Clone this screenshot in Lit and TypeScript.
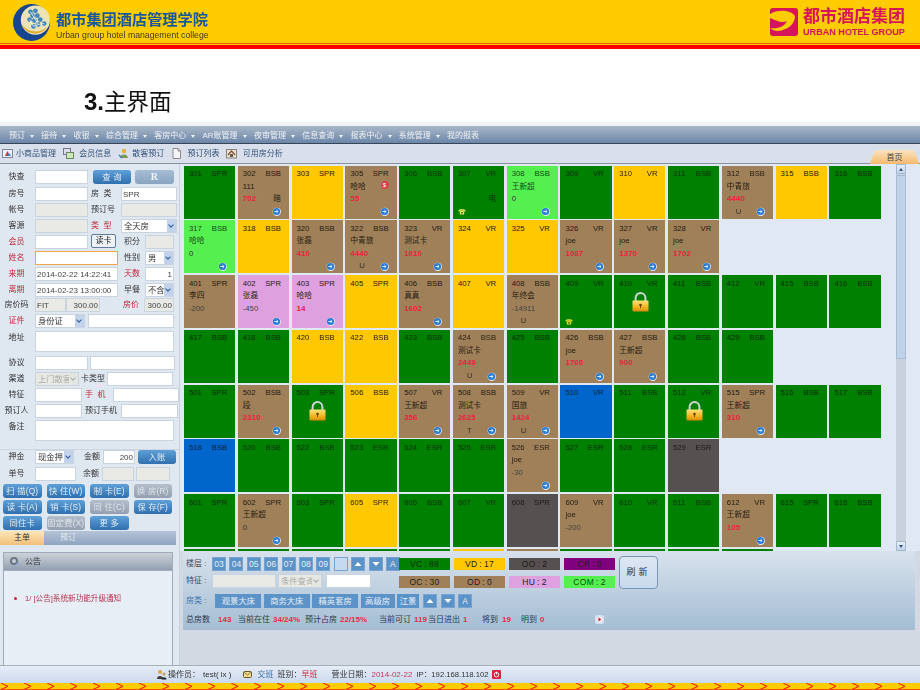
import { LitElement, html, css, svg } from 'lit';
import { customElement } from 'lit/decorators.js';

type Room = {
  no: string; type: string; c: string;
  name?: string; amt?: string; red?: boolean; note?: string; flag?: string;
  dot?: boolean; phone?: string; lock?: boolean; badge?: boolean;
};

const g = (no: string, type: string, extra: Partial<Room> = {}): Room => ({ no, type, c: 'vc', ...extra });
const y = (no: string, type: string): Room => ({ no, type, c: 'vd' });
// occupied room: brown tile with guest, balance and the blue marker
const o = (no: string, type: string, name: string, amt: string, flag = '', extra: Partial<Room> = {}): Room => ({
  no, type, c: 'oc', name, amt, red: !amt.startsWith('-') && amt !== '0', flag, dot: true, ...extra,
});

const ROWS: Room[][] = [
  [g('301', 'SPR'), o('302', 'BSB', '111', '702', '', { note: '暗' }), y('303', 'SPR'), o('305', 'SPR', '哈哈', '55', '', { badge: true }),
   g('306', 'BSB'), g('307', 'VR', { note: '电', phone: 'dark' }), o('308', 'BSB', '王新超', '0', '', { c: 'com' }), g('309', 'VR'), y('310', 'VR'),
   g('311', 'BSB'), o('312', 'BSB', '中青旅', '4440', 'U'), y('315', 'BSB'), g('316', 'BSB')],
  [o('317', 'BSB', '哈哈', '0', '', { c: 'com' }), y('318', 'BSB'), o('320', 'BSB', '张磊', '410'), o('322', 'BSB', '中青旅', '4440', 'U'),
   o('323', 'VR', '测试卡', '1010'), y('324', 'VR'), y('325', 'VR'), o('326', 'VR', 'joe', '1087'), o('327', 'VR', 'joe', '1370'), o('328', 'VR', 'joe', '1702')],
  [o('401', 'SPR', '李四', '-200', '', { dot: false }), o('402', 'SPR', '张磊', '-450', '', { c: 'hu' }), o('403', 'SPR', '哈哈', '14', '', { c: 'hu' }),
   y('405', 'SPR'), o('406', 'BSB', '真真', '1602'), y('407', 'VR'), o('408', 'BSB', '年终会', '-14911', 'U', { dot: false }),
   g('409', 'VR', { phone: 'yellow' }), g('410', 'VR', { lock: true }), g('411', 'BSB'), g('412', 'VR'), g('415', 'BSB'), g('416', 'BSB')],
  [g('417', 'BSB'), g('418', 'BSB'), y('420', 'BSB'), y('422', 'BSB'), g('423', 'BSB'), o('424', 'BSB', '测试卡', '2449', 'U'), g('425', 'BSB'),
   o('426', 'BSB', 'joe', '1760'), o('427', 'BSB', '王新超', '900'), g('428', 'BSB'), g('429', 'BSB')],
  [g('501', 'SPR'), o('502', 'BSB', '段', '2310'), g('503', 'SPR', { lock: true }), y('506', 'BSB'), o('507', 'VR', '王新超', '356'),
   o('508', 'BSB', '测试卡', '2625', 'T'), o('509', 'VR', '国旅', '1424', 'U'), { no: '510', type: 'VR', c: 'blue' }, g('511', 'BSB'), g('512', 'VR', { lock: true }),
   o('515', 'SPR', '王新超', '310'), g('516', 'BSB'), g('517', 'BSB')],
  [{ no: '518', type: 'BSB', c: 'blue' }, g('520', 'BSB'), g('522', 'BSB'), g('523', 'ESR'), g('524', 'ESR'), g('525', 'ESR'), o('526', 'ESR', 'joe', '-30'),
   g('527', 'ESR'), g('528', 'ESR'), { no: '529', type: 'ESR', c: 'oo' }],
  [g('601', 'SPR'), o('602', 'SPR', '王新超', '0'), g('603', 'SPR'), y('605', 'SPR'), g('606', 'BSB'), g('607', 'VR'), { no: '608', type: 'SPR', c: 'oo' },
   o('609', 'VR', 'joe', '-200', '', { dot: false }), g('610', 'VR'), g('611', 'BSB'), o('612', 'VR', '王新超', '105'), g('615', 'SPR'), g('616', 'BSB')],
];

// the eighth row only shows its top edge above the panel
const NEXT_ROW = ['vc', 'vc', 'vc', 'vc', 'vc', 'vd', 'oc', 'vc', 'vc', 'vc', 'vc'];

const MENU = ['预订', '接待', '收银', '综合管理', '客房中心', 'AR账管理', '夜审管理', '信息查询', '报表中心', '系统管理'];

const dotIcon = html`<svg class="dot" viewBox="0 0 10 10"><circle cx="5.300" cy="5.300" r="4.600" fill="#e8eef6"/><circle cx="5" cy="5" r="4" fill="#2a78d0"/><path d="M2.600 5h4M5 3.400 6.800 5 5 6.600" fill="none" stroke="#dff" stroke-width="1"/></svg>`;

const lockIcon = html`<svg class="lock" viewBox="0 0 17 20"><path d="M3.600 10V6a4.900 4.900 0 0 1 9.800 0v4" fill="none" stroke="#cfd4d8" stroke-width="2"/><rect x=".5" y="8.500" width="16" height="11" rx="1" fill="url(#lk)"/><defs><linearGradient id="lk" x1="0" y1="0" x2="0" y2="1"><stop offset="0" stop-color="#ffe27a"/><stop offset=".6" stop-color="#f5b41e"/><stop offset="1" stop-color="#d88a08"/></linearGradient></defs><circle cx="8.500" cy="13" r="1.300" fill="#6a4300"/><rect x="8" y="13" width="1" height="3" fill="#6a4300"/></svg>`;

const phoneIcon = (tone: string) => html`<svg class="phone ${tone}" viewBox="0 0 9 8"><path d="M.5 3C1 1 8 1 8.500 3V4H6.500V3H2.500V4H.500Z" fill="currentColor"/><path d="M2 4.500 3 3.500H6L7 4.500V7.500H2Z" fill="currentColor"/><circle cx="4.500" cy="5.500" r="1" fill="#165a10"/></svg>`;

@customElement('app-root')
export class AppRoot extends LitElement {
  static styles = css`
    :host { display: block; width: 920px; height: 690px; overflow: hidden; background: #fff; }
    * { box-sizing: border-box; }
    .page { width: 920px; height: 690px; display: flex; flex-direction: column; filter: blur(.3px);
      font: 8px/1 "Liberation Sans", "Noto Sans CJK SC", sans-serif; color: #222; }

    /* slide header */
    .head { height: 49px; flex: none; background: #ffcc00; border-bottom: 4px solid #f00; display: flex; justify-content: space-between; position: relative; }
    .head::after { content: ""; position: absolute; left: 0; right: 0; bottom: 1px; height: 1px; background: #e8590a; }
    .brand { display: flex; gap: 5px; padding: 4px 0 0 12px; }
    .brand svg { width: 39px; height: 37px; }
    .brand-zh { font-size: 15.200px; font-weight: 700; color: #17579e; margin-top: 7px; white-space: nowrap; line-height: 18px; }
    .brand-en { font-size: 8.700px; color: #3b3b30; margin-top: 2px; white-space: nowrap; }
    .group { display: flex; gap: 5px; padding: 8px 15px 0 0; }
    .group svg { width: 28px; height: 28px; }
    .group-zh { font-size: 17px; font-weight: 700; color: #d5145c; line-height: 17px; white-space: nowrap; }
    .group-en { font-size: 9.100px; font-weight: 700; color: #d5145c; margin-top: 3px; white-space: nowrap; }
    .title { height: 73px; flex: none; padding: 39px 0 0 84px; font-size: 22.500px; line-height: 28px; color: #111; }
    .title b { font-weight: 700; font-size: 24px; }

    /* menu and toolbar */
    .menu { height: 22px; flex: none; border-top: 4px solid #eff3f6; border-bottom: 1px solid #39465a; background: linear-gradient(#a9b7c9, #6b86a8);
      display: flex; padding: 2px 0 0 9px; align-items: center; color: #eef1f5; }
    .menu span { display: flex; align-items: center; white-space: nowrap; margin-right: 7.300px; }
    .menu i { width: 0; height: 0; border: 2px solid transparent; border-top: 3px solid #eef1f5; border-bottom: 0; margin: 1px 0 0 5px; }
    .tools { height: 20px; flex: none; background: #d9e0eb; border-bottom: 1px solid #88929f; display: flex; align-items: center; padding-left: 2px; color: #33507a; position: relative; }
    .tools span { display: flex; align-items: center; gap: 3px; margin-right: 7px; white-space: nowrap; }
    .tools svg { width: 11px; height: 11px; }
    .home-tab { position: absolute; right: 1px; bottom: -1px; width: 49px; height: 14px; background: linear-gradient(#fbe3c0, #f5ba6e);
      clip-path: polygon(0 100%, 9% 8%, 14% 0, 86% 0, 91% 8%, 100% 100%); text-align: center; line-height: 15px; color: #444; }

    .main { flex: 1; display: flex; min-height: 0; }

    /* left form */
    .left { width: 180px; flex: none; background: #dfe7f1; border-right: 1px solid #c9d3de; padding-top: 6px; display: flex; flex-direction: column; }
    .r { display: flex; align-items: flex-start; height: 16px; flex: none; white-space: nowrap; }
    .r.t17 { height: 17px; } .r.t15 { height: 15px; } .r.t25 { height: 25px; } .r.t21 { height: 21px; }
    .lb { width: 35px; flex: none; text-align: center; line-height: 14px; padding-right: 2px; font-weight: 400; color: #333; }
    .lb.n { width: auto; padding: 0; }
    .red { color: #c4283a !important; }
    .f { height: 14px; border: 1px solid #c9d4df; background: #fff; font: 8px "Liberation Sans", "Noto Sans CJK SC", sans-serif; color: #444; padding: 0 1px; flex: none; display: block; outline: none; border-radius: 0; }
    .f.gr { background: #e9e9e6; }
    .f.ra { text-align: right; }
    .f.on { border-color: #efa548; }
    .f.tall { height: 21px; }
    .sel { height: 14px; border: 1px solid #c9d4df; background: #fff; flex: none; display: flex; font-size: 8.300px; line-height: 12px; padding-left: 2px; overflow: hidden; color: #333; }
    .sel em { font-style: normal; flex: 1; overflow: hidden; white-space: nowrap; }
    .sel i { width: 9px; flex: none; background: #c3d3ec; position: relative; }
    .sel i::after { content: ""; position: absolute; left: 2px; top: 3px; width: 3px; height: 3px; border: solid #2c5aa0; border-width: 0 1.200px 1.200px 0; transform: rotate(45deg); }
    .sel.off { background: #e9e9e3; color: #aaa; }
    .sel.off i { background: #e4e6e0; }
    .sel.off i::after { border-color: #aaa; }
    .w29 { width: 29px; } .w30 { width: 30px; } .w31 { width: 31px; } .w32 { width: 32px; } .w34 { width: 34px; } .w38 { width: 38px; } .w39 { width: 39px; }
    .w41 { width: 41px; } .w44 { width: 44px; } .w45 { width: 45px; } .w47 { width: 47px; } .w50 { width: 50px; } .w53 { width: 53px; } .w56 { width: 56px; } .w57 { width: 57px; } .w64 { width: 64px; } .w66 { width: 66px; } .w83 { width: 83px; } .w85 { width: 85px; } .w86 { width: 86px; } .w139 { width: 139px; }
    .ml2 { margin-left: 2px; } .ml3 { margin-left: 3px; } .ml4 { margin-left: 4px; } .ml5 { margin-left: 5px; } .ml7 { margin-left: 7px; } .ml8 { margin-left: 8px; } .ml10 { margin-left: 10px; }
    .ll { width: 30px; flex: none; text-align: left; margin-left: 3px; line-height: 14px; color: #333; }
    .ll.s { width: 21px; margin-left: 6px; }
    .ll.pt { margin-left: 8px; }
    .ll.pr { margin-left: 23px; }
    .btn { height: 14px; flex: none; border-radius: 3px; background: linear-gradient(#5fa0d8, #2f6fae); color: #e3edf6; text-align: center; line-height: 14px; font-size: 8.300px; letter-spacing: .2px; white-space: nowrap; overflow: hidden; }
    .btn.gray { background: linear-gradient(#b4becb, #939fb0); color: #dde2e8; }
    .btn.pale { background: linear-gradient(#a5bcd4, #8aa5c2); font: 700 10px/14px "Liberation Serif", serif; color: #eef3f8; }
    .read { width: 25px; height: 14px; margin: -1px 0 0 3px; background: #eef2f6; border: 1px solid #607d9c; border-radius: 2px; text-align: center; line-height: 12px; flex: none; }
    .divider { height: 9px; flex: none; border-bottom: 1px solid #ccd5e0; }
    .divider { margin-top: 0; }
    .acts { display: grid; grid-template-columns: repeat(4, 38.500px); column-gap: 5px; row-gap: 2px; grid-auto-rows: 14px; padding: 0 0 0 3px; flex: none; }
    .tabs { height: 14px; flex: none; margin-top: 1px; width: 176px; display: flex; background: linear-gradient(#b4c3d7, #8ea4bf); color: #e5ebf1; line-height: 14px; }
    .tabs b { width: 44px; font-weight: 400; text-align: center; background: linear-gradient(#fde6b8, #f2c07a); color: #333; }
    .tabs span { width: 46px; text-align: center; padding-left: 2px; }
    .notice { margin: 7px 6px 0 3px; flex: 1; border: 1px solid #9eaaba; border-bottom: 0; background: #e8eef6; }
    .notice-h { height: 18px; background: linear-gradient(#cdd2d9, #939fb0); display: flex; align-items: center; gap: 5px; padding-left: 5px; border-bottom: 1px solid #a0adba; color: #333; }
    .notice-h svg { width: 11px; height: 11px; }
    .notice-b { display: flex; align-items: center; gap: 8px; padding: 24px 0 0 10px; color: #b0384e; font-size: 7.600px; white-space: nowrap; }
    .notice-b i { width: 3px; height: 3px; border-radius: 50%; background: #d81e3c; flex: none; }

    /* room board */
    .right { flex: 1; min-width: 0; display: flex; flex-direction: column; background: #d2d9e2; }
    .board { height: 387px; flex: none; display: flex; background: #dfe8f3; }
    .rooms { width: 715px; flex: none; overflow: hidden; padding: 1.500px 0 0 4px; display: flex; flex-direction: column; gap: 1.800px; }
    .row { display: flex; gap: 2.600px; flex: none; }
    .cell { width: 51.200px; height: 53px; flex: none; position: relative; padding: 2.500px 8px 0 5px; color: #241c12; font-size: 7.700px; }
    .cell > div { height: 12.500px; line-height: 12.500px; display: flex; justify-content: space-between; align-items: center; white-space: nowrap; }
    .vc { background: #008000; color: #0b2d0b; } .vd { background: #ffc800; }
    .oc { background: #a08058; } .hu { background: #dfa0df; } .com { background: #55f050; color: #154a15; }
    .blue { background: #0066cc; color: #0c2340; } .oo { background: #575050; color: #1c1a1a; }
    .cr { background: #800080; }
    .amt { color: #333; }
    .amt.neg { color: #444; }
    .amt.pos { color: #ea2440; font-size: 8px; font-weight: 700; }
    .flag { margin-left: 9px; color: #3a3026; }
    .dot { width: 9px; height: 9px; margin-left: auto; flex: none; }
    .s-badge { position: absolute; right: 8px; top: 15px; width: 8px; height: 8px; border-radius: 50%; background: #d8404a; color: #fff; font-size: 6px; line-height: 8px; text-align: center; }
    .lock { position: absolute; left: 17.500px; top: 16.500px; width: 17px; height: 20px; }
    .phone { width: 8px; height: 7px; flex: none; }
    .phone.dark { color: #f2e85a; }
    .phone.yellow { color: #e4dc1e; }
    .sb { width: 10px; flex: none; background: #c9d2dc; display: flex; flex-direction: column; margin-left: 1px; position: relative; }
    .sb-btn { height: 10px; background: linear-gradient(#e6eef8, #c3d4ea); border: 1px solid #a5b8cf; display: flex; align-items: center; justify-content: center; flex: none; }
    .sb-btn i { width: 0; height: 0; border: 2.500px solid transparent; border-bottom: 3px solid #36547e; border-top: 0; }
    .sb-btn.dn i { border-bottom: 0; border-top: 3px solid #36547e; }
    .sb-thumb { height: 184px; background: #bfd2e8; border: 1px solid #a8bcd4; flex: none; margin-top: 1px; }
    .sb-fill { flex: 1; }

    /* bottom panel */
    .panel { height: 79px; flex: none; margin: 0 5px 0 3px; padding: 6px 0 0 3px; background: linear-gradient(#d8e2ed, #a4bdd3); }
    .ptop { display: flex; height: 36px; }
    .pleft { width: 213px; flex: none; display: flex; flex-direction: column; gap: 3px; }
    .pr { display: flex; align-items: center; height: 14px; }
    .plb { width: 26px; flex: none; color: #3a4c66; white-space: nowrap; }
    .plb.blue-t { color: #3f76b0; }
    .pgap { display: flex; gap: 3.400px; }
    .t { width: 14px; height: 14px; flex: none; background: #5b93c8; color: #e6eef6; text-align: center; line-height: 12px; font-size: 8.500px; border: 1px solid #76a5d3; }
    .t.blank { background: #c5daf1; }
    .t svg { width: 8px; height: 6px; display: block; margin: 3px auto 0; }
    .chips { display: grid; grid-template-columns: repeat(4, 51px); grid-auto-rows: 12px; gap: 6px 4px; margin-top: 1px; flex: none; }
    .chip { text-align: center; line-height: 12px; font-size: 8.500px; letter-spacing: .3px; white-space: nowrap; }
    .chip b { font-weight: 400; margin: 0 2px; }
    .refresh { width: 39px; height: 33px; margin: -1px 0 0 4px; border: 1px solid #7b97b6; border-radius: 4px; background: linear-gradient(#dde7f2, #c8d9ee); text-align: center; line-height: 31px; letter-spacing: 3px; font-size: 9px; color: #333; flex: none; }
    .types { display: flex; align-items: center; gap: 2.400px; margin-top: 1px; height: 14px; }
    .types .plb { margin-right: 1px; }
    .ty { height: 14px; flex: none; background: #5b93c8; color: #e6eef6; text-align: center; line-height: 14px; font-size: 8.300px; }
    .ty.a { width: 46px; } .ty.b { width: 34px; } .ty.c { width: 22px; margin-right: 2px; }
    .stats { display: grid; grid-template-columns: 32px 20px 35px 32px 35px 39px 35px 14px 35px 19px 20px 19px 19px 55px 8px; margin-top: 7px; line-height: 10px; color: #2c3a4c; white-space: nowrap; }
    .stats b { color: #e52c44; font-weight: 700; }
    .stats svg { width: 9px; height: 9px; }

    .status { height: 18px; flex: none; border-top: 1px solid #a5b0bb; background: linear-gradient(#e6edf7, #cbd9ee); display: flex; align-items: center; padding-left: 157px; white-space: nowrap; color: #333; }
    .status svg { flex: none; }
    .status .lnk { color: #3a6fa8; }
    .status .rd { color: #d8243c; }
    .status .pk { color: #c23a5c; }
    .status .who { margin: 0 12px 0 3px; }
    .status .gap4 { margin-left: 4px; }
    .status .gap5 { margin-left: 5px; }
    .status .gap14 { margin-left: 14px; }
    .status .ip { font-size: 7.700px; margin-left: 4px; }
    .band { height: 7px; flex: none; display: block; width: 920px; }
  `;

  private renderRoom(r: Room) {
    const amtClass = r.red ? 'pos' : r.amt && r.amt.startsWith('-') ? 'neg' : '';
    return html`<div class="cell ${r.c}">
      <div><span>${r.no}</span><span>${r.type}</span></div>
      <div>${r.name ?? ''}</div>
      <div><span class="amt ${amtClass}">${r.amt ?? ''}</span><span>${r.note ?? ''}</span></div>
      <div>${r.phone ? phoneIcon(r.phone) : ''}${r.flag ? html`<span class="flag">${r.flag}</span>` : ''}${r.dot ? dotIcon : ''}</div>
      ${r.badge ? html`<span class="s-badge">$</span>` : ''}
      ${r.lock ? lockIcon : ''}
    </div>`;
  }

  private renderForm() {
    const sel = (txt: string, w: string, off = false) => html`<div class="sel ${w} ${off ? 'off' : ''}"><em>${txt}</em><i></i></div>`;
    return html`
      <div class="r t17"><span class="lb">快查</span><input class="f w53" /><div class="btn w38 ml5">查 询</div><div class="btn pale w39 ml4">R</div></div>
      <div class="r"><span class="lb">房号</span><input class="f w53" /><span class="ll">房 &nbsp;类</span><input class="f w56" value="SPR" /></div>
      <div class="r"><span class="lb">帐号</span><input class="f gr w53" /><span class="ll">预订号</span><input class="f gr w56" /></div>
      <div class="r"><span class="lb">客源</span><input class="f gr w53" /><span class="ll red">类 &nbsp;型</span>${sel('全天房', 'w56')}</div>
      <div class="r"><span class="lb red">会员</span><input class="f w53" /><div class="read">读卡</div><span class="ll s pt">积分</span><input class="f gr w29" /></div>
      <div class="r"><span class="lb red">姓名</span><input class="f on w83" /><span class="ll s">性别</span>${sel('男', 'w29')}</div>
      <div class="r"><span class="lb red">来期</span><input class="f w83" value="2014-02-22 14:22:41" /><span class="ll s red">天数</span><input class="f ra w29" value="1" /></div>
      <div class="r t15"><span class="lb red">离期</span><input class="f w83" value="2014-02-23 13:00:00" /><span class="ll s">早餐</span>${sel('不含', 'w29')}</div>
      <div class="r"><span class="lb">房价码</span><input class="f gr w31" value="FIT" /><input class="f gr ra w34" value="300.00" /><span class="ll s pr red">房价</span><input class="f gr ra w30" value="300.00" /></div>
      <div class="r t17"><span class="lb red">证件</span>${sel('身份证', 'w50')}<input class="f w86 ml3" /></div>
      <div class="r t25"><span class="lb">地址</span><input class="f tall w139" /></div>
      <div class="r"><span class="lb">协议</span><input class="f w53" /><input class="f w85 ml2" /></div>
      <div class="r"><span class="lb">渠道</span>${sel('上门散客', 'w44', true)}<span class="lb n ml2">卡类型</span><input class="f w66 ml2" /></div>
      <div class="r"><span class="lb">特征</span><input class="f w47" /><span class="lb n red ml3">手 &nbsp;机</span><input class="f w66 ml8" /></div>
      <div class="r"><span class="lb">预订人</span><input class="f w47" /><span class="lb n ml3">预订手机</span><input class="f w57 ml4" /></div>
      <div class="r t21"><span class="lb">备注</span><input class="f tall w139" /></div>
      <div class="divider"></div>
      <div class="r t17"><span class="lb">押金</span>${sel('现金押', 'w39')}<span class="lb n ml10">金额</span><input class="f ra w32 ml3" value="200" /><div class="btn w38 ml3">入账</div></div>
      <div class="r t17"><span class="lb">单号</span><input class="f w41" /><span class="lb n ml7">余额</span><input class="f gr w32 ml3" /><input class="f gr w34 ml2" /></div>
      <div class="acts">
        <div class="btn">扫 描(Q)</div><div class="btn">快 住(W)</div><div class="btn">制 卡(E)</div><div class="btn gray">换 房(R)</div>
        <div class="btn">读 卡(A)</div><div class="btn">销 卡(S)</div><div class="btn gray">同 住(C)</div><div class="btn">保 存(F)</div>
        <div class="btn">同住卡</div><div class="btn gray">固定费(X)</div><div class="btn">更 多</div>
      </div>
      <div class="tabs"><b>主单</b><span>预订</span></div>
      <div class="notice">
        <div class="notice-h"><svg viewBox="0 0 11 11"><circle cx="5" cy="5" r="4" fill="#6b7684"/><circle cx="5" cy="5" r="2" fill="#c8ced6"/><path d="M5 10 10 6 10 9Z" fill="#9aa8d8"/></svg>公告</div>
        <div class="notice-b"><i></i><span>1/ [公告]系统新功能升级通知</span></div>
      </div>`;
  }

  private arrows() {
    return html`
      <div class="t"><svg viewBox="0 0 8 6"><path d="M4 1 7.500 5H.5Z" fill="#fff"/></svg></div>
      <div class="t"><svg viewBox="0 0 8 6"><path d="M4 5 7.500 1H.5Z" fill="#fff"/></svg></div>
      <div class="t">A</div>`;
  }

  render() {
    const floors = ['03', '04', '05', '06', '07', '08', '09'];
    const chips = [
      ['vc', 'VC', '88'], ['vd', 'VD', '17'], ['oo', 'OO', '2'], ['cr', 'CR', '0'],
      ['oc', 'OC', '30'], ['oc', 'OD', '0'], ['hu', 'HU', '2'], ['com', 'COM', '2'],
    ];
    const stats = [
      ['总房数', '143'], ['当前在住', '34/24%'], ['预计占房', '22/15%'], ['当前可订', '119'],
      ['当日进出', '1'], ['将到', '19'], ['明到', '0'],
    ];
    return html`<div class="page">
      <header class="head">
        <div class="brand">
          <svg viewBox="0 0 40 38">
            <circle cx="20" cy="19" r="19" fill="#17468f"/>
            <circle cx="24" cy="16.500" r="15" fill="#ebe3b4"/>
            <path d="M10 21a15 15 0 0 0 26 3 18 18 0 0 1-26-3Z" fill="#e0a826"/>
            ${[[19,8],[24,7],[21,12],[26,12],[18,16],[23,17],[29,16],[27,21],[33,20],[22,23]].map(([cx, cy]) => svg`<circle cx=${cx} cy=${cy} r="2.400" fill="#3f86bf"/>`)}
            <path d="M19 8 27 21 33 20M18 16 22 23 27 21" fill="none" stroke="#fff" stroke-width=".8"/>
          </svg>
          <div><div class="brand-zh">都市集团酒店管理学院</div><div class="brand-en">Urban group hotel management college</div></div>
        </div>
        <div class="group">
          <svg viewBox="0 0 28 28"><rect width="28" height="28" rx="3" fill="#d5145c"/><path d="M0 6C8 1 21 2 25 8 25 16 18 22 8 23 5 23 2 22 0 20 8 21 14 19 17 13 12 16 5 12 0 10Z" fill="#ffcc00"/></svg>
          <div><div class="group-zh">都市酒店集团</div><div class="group-en">URBAN HOTEL GROUP</div></div>
        </div>
      </header>
      <div class="title"><b>3.</b>主界面</div>

      <nav class="menu">${MENU.map((m) => html`<span>${m}<i></i></span>`)}<span>我的报表</span></nav>
      <div class="tools">
        <span><svg viewBox="0 0 11 11"><rect x=".5" y="1.500" width="10" height="8" fill="#eef" stroke="#7788a0"/><path d="M3 8 5.500 3 8 8Z" fill="#c33"/><path d="M5.500 8 7 5 9 8Z" fill="#38c"/></svg>小商品管理</span>
        <span><svg viewBox="0 0 11 11"><rect x=".5" y=".5" width="7" height="6" fill="#dde" stroke="#778"/><rect x="3.500" y="4.500" width="7" height="6" fill="#cfe6b8" stroke="#686"/></svg>&nbsp;会员信息</span>
        <span><svg viewBox="0 0 11 11"><circle cx="6" cy="3" r="2.200" fill="#e5b23c"/><path d="M2 10C2 6 9 5 10 10Z" fill="#7a9a4c"/><path d="M1 7 4 10" stroke="#4a7cc0" stroke-width="1.500"/></svg>散客预订</span>
        <span><svg viewBox="0 0 11 11"><path d="M2 .5H7L9.500 3V10.500H2Z" fill="#f4f4f4" stroke="#8a8a8a"/><path d="M7 .5V3H9.500" fill="none" stroke="#8a8a8a"/></svg>&nbsp;预订列表</span>
        <span><svg viewBox="0 0 11 11"><rect x=".5" y="1.500" width="10" height="8.500" fill="#e6e2da" stroke="#8a8478"/><path d="M2 7 5.500 3 9 7" fill="none" stroke="#8a4a2a" stroke-width="1.200"/><rect x="4" y="6" width="3" height="3" fill="#6a5a4a"/></svg>&nbsp;可用房分析</span>
        <div class="home-tab">首页</div>
      </div>

      <div class="main">
        <aside class="left">${this.renderForm()}</aside>
        <section class="right">
          <div class="board">
            <div class="rooms">
              ${ROWS.map((row) => html`<div class="row">${row.map((r) => this.renderRoom(r))}</div>`)}
              <div class="row">${NEXT_ROW.map((c) => html`<div class="cell ${c}"></div>`)}</div>
            </div>
            <div class="sb">
              <div class="sb-btn"><i></i></div>
              <div class="sb-thumb"></div>
              <div class="sb-fill"></div>
              <div class="sb-btn dn"><i></i></div>
            </div>
          </div>
          <div class="panel">
            <div class="ptop">
              <div class="pleft">
                <div class="pr">
                  <span class="plb">楼层 :</span>
                  <div class="pgap">${floors.map((f) => html`<div class="t">${f}</div>`)}<div class="t blank"></div>${this.arrows()}</div>
                </div>
                <div class="pr">
                  <span class="plb">特征 :</span>
                  <input class="f gr w64" />
                  <div class="sel off w44 ml2"><em>条件查询</em><i></i></div>
                  <input class="f w45 ml4" />
                </div>
              </div>
              <div class="chips">
                ${chips.map(([c, k, v]) => html`<div class="chip ${c}">${k}<b>:</b>${v}</div>`)}
              </div>
              <div class="refresh">刷新</div>
            </div>
            <div class="types">
              <span class="plb blue-t">房类 :</span>
              <div class="ty a">观景大床</div><div class="ty a">商务大床</div><div class="ty a">精英套房</div><div class="ty b">高级房</div><div class="ty c">江景</div>
              <div class="pgap">${this.arrows()}</div>
            </div>
            <div class="stats">
              ${stats.map(([k, v]) => html`<span>${k}</span><b>${v}</b>`)}
              <svg viewBox="0 0 9 9"><rect width="9" height="9" rx="2" fill="#cfe0f2"/><circle cx="4.500" cy="4.500" r="3.300" fill="#f3e6ec"/><path d="M3.500 2.500 6.200 4.500 3.500 6.500Z" fill="#d01838"/></svg>
            </div>
          </div>
        </section>
      </div>

      <footer class="status">
        <svg width="10" height="11" viewBox="0 0 10 11"><circle cx="3" cy="3" r="2" fill="#d8a848"/><path d="M0 10C0 6 6 6 6 10Z" fill="#3a3a3a"/><circle cx="7" cy="5" r="1.600" fill="#caa060"/><path d="M4.500 10.500C4.500 7.500 9.500 7.500 9.500 10.500Z" fill="#222"/></svg>
        <span class="status-op" style="margin-left:1px">操作员：</span>
        <span class="who">test( lx )</span>
        <svg width="9" height="7" viewBox="0 0 9 7"><rect x=".5" y=".5" width="8" height="6" rx="1" fill="#f3dc90" stroke="#6a5a28"/><path d="M1 1 4.500 4 8 1" fill="none" stroke="#6a5a28" stroke-width=".8"/></svg>
        <span class="lnk gap5">交班</span>
        <span class="gap4">班别：</span><span class="rd">早班</span>
        <span class="gap14">营业日期：</span><span class="pk">2014-02-22</span>
        <span class="ip">IP：192.168.118.102</span>
        <svg class="gap4" width="9" height="9" viewBox="0 0 9 9"><rect width="9" height="9" rx="1" fill="#d8243c"/><circle cx="4.500" cy="4.700" r="2.300" fill="none" stroke="#fff" stroke-width=".9"/><path d="M4.500 1.800V4.500" stroke="#fff" stroke-width=".9"/></svg>
      </footer>

      <svg class="band" viewBox="0 0 920 7">
        <defs><pattern id="chev" width="23" height="7" patternUnits="userSpaceOnUse" x="-1"><path d="M2 0 9 3.300 2 6.500" fill="none" stroke="#f01010" stroke-width="1"/></pattern></defs>
        <rect width="920" height="7" fill="#ffcc00"/><rect width="920" height="7" fill="url(#chev)"/><rect y="6.200" width="920" height=".8" fill="#f03010"/>
      </svg>
    </div>`;
  }
}
